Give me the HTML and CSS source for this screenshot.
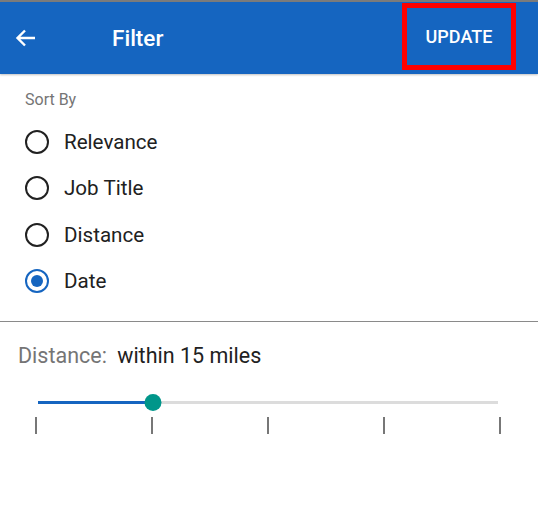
FILE: index.html
```html
<!DOCTYPE html>
<html lang="en">

<head>
     <meta charset="UTF-8">
     <meta name="viewport" content="width=device-width, initial-scale=1.0">
     <title>Filter</title>
     <link rel="stylesheet" href="styles.css">
</head>

<body>
     <header class="topbar">
          <button class="back" aria-label="Back">
               <svg width="24" height="24" viewBox="0 0 24 24">
                    <path d="M21 12H3.5M11 4.5L3.5 12l7.5 7.5" fill="none" stroke="#fff" stroke-width="2.4" />
               </svg>
          </button>
          <h1 class="title">Filter</h1>
          <button class="update">UPDATE</button>
     </header>

     <section class="sort">
          <p class="section-label">Sort By</p>
          <ul class="radios">
               <li class="radio"><span class="dot"></span>Relevance</li>
               <li class="radio"><span class="dot"></span>Job Title</li>
               <li class="radio"><span class="dot"></span>Distance</li>
               <li class="radio checked"><span class="dot"></span>Date</li>
          </ul>
     </section>

     <section class="distance">
          <p class="distance-line"><span class="muted">Distance:</span> within 15 miles</p>
          <div class="slider">
               <div class="track">
                    <div class="fill" style="width: 25%"></div>
                    <div class="thumb" style="left: 25%"></div>
               </div>
               <div class="ticks">
                    <span></span><span></span><span></span><span></span><span></span>
               </div>
          </div>
     </section>
</body>

</html>
```

FILE: styles.css
```css
/* Base styles */
body {
     margin: 0;
     background: #ffffff;
     color: #212121;
     font-family: Roboto, "Liberation Sans", sans-serif;
}

/* App bar */
.topbar {
     display: flex;
     align-items: center;
     height: 72px;
     border-top: 2px solid #7b7b7b;
     background: #1565c0;
     box-shadow: 0 1px 2px rgba(0, 0, 0, 0.25);
}

.topbar .back {
     display: flex;
     padding: 0;
     margin: 0 0 0 14px;
     border: 0;
     background: none;
}

.topbar .title {
     margin: 0 0 0 74px;
     color: #ffffff;
     font-size: 22.5px;
     font-weight: 500;
}

.topbar .update {
     margin-left: auto;
     margin-right: 22px;
     margin-top: -3px;
     width: 114px;
     height: 67px;
     border: 5px solid #ff0000;
     background: none;
     color: #ffffff;
     font-family: inherit;
     font-size: 18px;
     font-weight: 500;
     padding: 0;
}

/* Sort section */
.sort {
     padding: 16px 0 17px 25px;
     border-bottom: 1px solid #8a8a8a;
}

.section-label {
     margin: 0;
     color: #757575;
     font-size: 16px;
     line-height: 20px;
}

.radios {
     list-style: none;
     margin: 9px 0 0;
     padding: 0;
}

.radio {
     display: flex;
     align-items: center;
     height: 46.3px;
     font-size: 20.6px;
}

.radio .dot {
     box-sizing: border-box;
     width: 24px;
     height: 24px;
     margin-right: 15px;
     border: 2px solid #212121;
     border-radius: 50%;
     display: flex;
     align-items: center;
     justify-content: center;
}

.radio.checked .dot {
     border-color: #1565c0;
}

.radio.checked .dot::after {
     content: "";
     width: 12px;
     height: 12px;
     border-radius: 50%;
     background: #1565c0;
}

/* Distance section */
.distance {
     padding: 21px 0 0 18px;
}

.distance-line {
     margin: 0;
     font-size: 21.5px;
     line-height: 26px;
}

.distance-line .muted {
     color: #757575;
     margin-right: 5px;
}

.slider {
     margin: 32px 37px 0 17px;
}

.track {
     position: relative;
     height: 3px;
     margin: 0 3px;
     background: #dcdcdc;
}

.track .fill {
     height: 100%;
     background: #1565c0;
}

.track .thumb {
     position: absolute;
     top: -7px;
     width: 17px;
     height: 17px;
     border-radius: 50%;
     background: #00968a;
     transform: translateX(-50%);
}

.ticks {
     display: flex;
     justify-content: space-between;
     margin-top: 13px;
}

.ticks span {
     width: 2px;
     height: 17px;
     background: #777777;
}
```
